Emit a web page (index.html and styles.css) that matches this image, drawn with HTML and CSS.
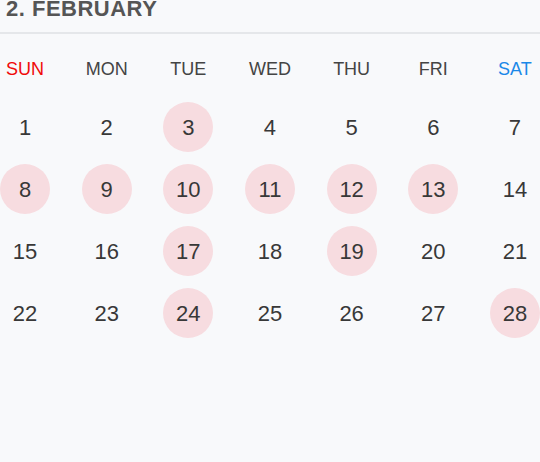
FILE: index.html
```html
<!DOCTYPE html>
<html>
<head>
<meta charset="utf-8">
<link rel="stylesheet" href="styles.css">
</head>
<body>
<div class="cal">
  <div class="title">2. FEBRUARY</div>
  <div class="weekdays">
    <div class="wd sun">SUN</div>
    <div class="wd">MON</div>
    <div class="wd">TUE</div>
    <div class="wd">WED</div>
    <div class="wd">THU</div>
    <div class="wd">FRI</div>
    <div class="wd sat">SAT</div>
  </div>
  <div class="days">
    <div class="week">
      <div class="d">1</div><div class="d">2</div><div class="d on">3</div><div class="d">4</div><div class="d">5</div><div class="d">6</div><div class="d">7</div>
    </div>
    <div class="week">
      <div class="d on">8</div><div class="d on">9</div><div class="d on">10</div><div class="d on">11</div><div class="d on">12</div><div class="d on">13</div><div class="d">14</div>
    </div>
    <div class="week">
      <div class="d">15</div><div class="d">16</div><div class="d on">17</div><div class="d">18</div><div class="d on">19</div><div class="d">20</div><div class="d">21</div>
    </div>
    <div class="week">
      <div class="d">22</div><div class="d">23</div><div class="d on">24</div><div class="d">25</div><div class="d">26</div><div class="d">27</div><div class="d on">28</div>
    </div>
  </div>
</div>
</body>
</html>
```
FILE: styles.css
```css
html, body {
  margin: 0;
  padding: 0;
  background: #f8f9fb;
}
body {
  width: 540px;
  height: 462px;
  overflow: hidden;
  font-family: "Liberation Sans", Arial, sans-serif;
}
.title {
  height: 32px;
  line-height: 18px;
  font-size: 22px;
  font-weight: bold;
  letter-spacing: 0.5px;
  color: #555555;
  padding-left: 6px;
  border-bottom: 2px solid #e5e7ea;
}
.weekdays {
  display: flex;
  justify-content: space-between;
  margin-top: 25px;
}
.wd {
  width: 50px;
  text-align: center;
  font-size: 18px;
  line-height: 20px;
  color: #444444;
}
.wd.sun { color: #f00a0a; }
.wd.sat { color: #1a88e8; }
.days {
  margin-top: 23px;
  display: flex;
  flex-direction: column;
  gap: 12px;
}
.week {
  display: flex;
  justify-content: space-between;
}
.d {
  width: 50px;
  height: 50px;
  line-height: 52px;
  border-radius: 50%;
  text-align: center;
  font-size: 22px;
  color: #383838;
}
.d.on {
  background: #f7dce0;
}
```
